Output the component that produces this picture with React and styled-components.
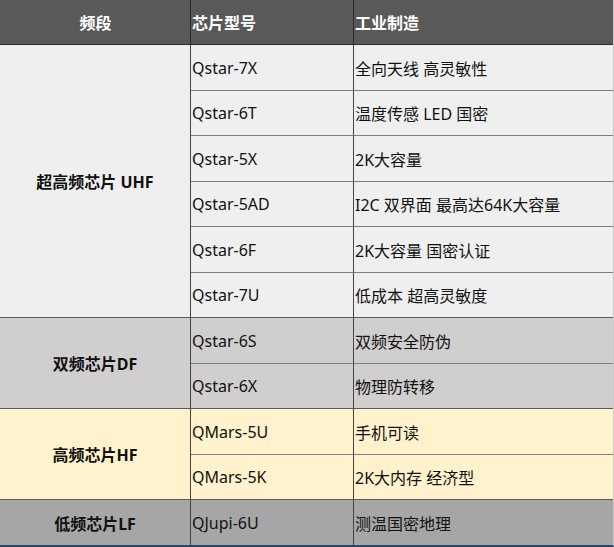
import React from 'react';
import styled, { createGlobalStyle } from 'styled-components';

const GlobalStyle = createGlobalStyle`
  html, body {
    margin: 0;
    padding: 0;
    background: #ffffff;
  }
  body {
    font-family: "Noto Sans", "Noto Sans CJK SC", sans-serif;
  }
`;

const Frame = styled.div`
  width: 613px;
  border-right: 1px solid #c9c9c9;
  border-bottom: 2px solid #2c4470;
  height: 545px;
  overflow: hidden;
`;

const Table = styled.table`
  width: 613px;
  table-layout: fixed;
  border-collapse: separate;
  border-spacing: 0;
  font-size: 16px;
  color: #111;
`;

const HeadRow = styled.tr`
  height: 45px;
  background: #595959;
`;

const HeadCell = styled.th`
  padding: 0 0 0 1px;
  font-weight: 700;
  color: #ffffff;
  text-align: ${({ center }) => (center ? 'center' : 'left')};
  border-bottom: 1px solid #2b2b2b;
  border-right: ${({ last }) => (last ? 'none' : '1px solid #2b2b2b')};
  white-space: nowrap;
`;

const Row = styled.tr`
  height: ${({ tall }) => (tall ? 46 : 45)}px;
  background: ${({ bg }) => bg};
`;

const GroupCell = styled.td`
  text-align: center;
  font-weight: 700;
  padding: 0;
  border-right: 1px solid #454545;
  border-bottom: 1px solid #5a5a5a;
  background: ${({ bg }) => bg};
`;

const Cell = styled.td`
  padding: 0 0 0 1px;
  white-space: nowrap;
  border-right: ${({ last }) => (last ? 'none' : '1px solid #454545')};
  border-bottom: 1px solid ${({ groupEnd }) => (groupEnd ? '#5a5a5a' : '#7d7d7d')};
`;

const groups = [
  {
    name: '超高频芯片 UHF',
    bg: '#efefef',
    rows: [
      ['Qstar-7X', '全向天线 高灵敏性'],
      ['Qstar-6T', '温度传感 LED 国密'],
      ['Qstar-5X', '2K大容量'],
      ['Qstar-5AD', 'I2C 双界面 最高达64K大容量'],
      ['Qstar-6F', '2K大容量 国密认证'],
      ['Qstar-7U', '低成本 超高灵敏度'],
    ],
  },
  {
    name: '双频芯片DF',
    bg: '#d0cece',
    rows: [
      ['Qstar-6S', '双频安全防伪'],
      ['Qstar-6X', '物理防转移'],
    ],
  },
  {
    name: '高频芯片HF',
    bg: '#fff2cc',
    rows: [
      ['QMars-5U', '手机可读'],
      ['QMars-5K', '2K大内存 经济型'],
    ],
  },
  {
    name: '低频芯片LF',
    bg: '#a6a6a6',
    rows: [['QJupi-6U', '测温国密地理']],
  },
];

const App = () => {
  let index = 0;
  return (
    <>
      <GlobalStyle />
      <Frame>
        <Table>
          <colgroup>
            <col style={{ width: 191 }} />
            <col style={{ width: 163 }} />
            <col />
          </colgroup>
          <thead>
            <HeadRow>
              <HeadCell center>频段</HeadCell>
              <HeadCell>芯片型号</HeadCell>
              <HeadCell last>工业制造</HeadCell>
            </HeadRow>
          </thead>
          <tbody>
            {groups.map((group) =>
              group.rows.map(([model, feature], i) => {
                const tall = index % 2 === 0;
                index += 1;
                const groupEnd = i === group.rows.length - 1;
                return (
                  <Row key={model} bg={group.bg} tall={tall}>
                    {i === 0 && (
                      <GroupCell rowSpan={group.rows.length} bg={group.bg}>
                        {group.name}
                      </GroupCell>
                    )}
                    <Cell groupEnd={groupEnd}>{model}</Cell>
                    <Cell groupEnd={groupEnd} last>{feature}</Cell>
                  </Row>
                );
              })
            )}
          </tbody>
        </Table>
      </Frame>
    </>
  );
};

export default App;
